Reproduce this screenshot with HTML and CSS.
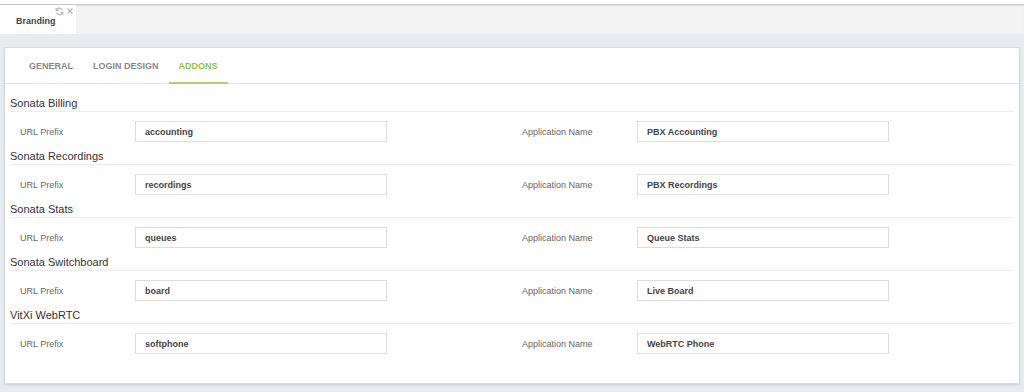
FILE: index.html
```html
<!DOCTYPE html>
<html>
<head>
<meta charset="UTF-8">
<title>Branding</title>
<link rel="stylesheet" href="styles.css">
</head>
<body>
<div class="topbar">
  <div class="doc-tab">
    <span class="doc-title">Branding</span>
    <span class="doc-icons">
      <svg class="ico" width="9" height="9" viewBox="0 0 8 8"><path d="M6.6 3.2A2.7 2.7 0 0 0 1.6 2.4M1.4 4.8a2.7 2.7 0 0 0 5 .8" fill="none" stroke="#b5b5b5" stroke-width="1"/><path d="M1 .8v2.2h2.2M7 7.2V5H4.8" fill="none" stroke="#b5b5b5" stroke-width="1"/></svg>
      <svg class="ico" width="8" height="8" viewBox="0 0 8 8"><path d="M1.5 1.5l5 5M6.5 1.5l-5 5" stroke="#b5b5b5" stroke-width="1.3"/></svg>
    </span>
  </div>
</div>
<div class="page">
  <div class="panel">
    <div class="tabs">
      <div class="tab">GENERAL</div>
      <div class="tab">LOGIN DESIGN</div>
      <div class="tab active">ADDONS</div>
    </div>
    <div class="panel-body">
      <div class="section">
        <div class="section-title">Sonata Billing</div>
        <div class="row">
          <div class="field"><label>URL Prefix</label><input type="text" value="accounting"></div>
          <div class="field"><label>Application Name</label><input type="text" value="PBX Accounting"></div>
        </div>
      </div>
      <div class="section">
        <div class="section-title">Sonata Recordings</div>
        <div class="row">
          <div class="field"><label>URL Prefix</label><input type="text" value="recordings"></div>
          <div class="field"><label>Application Name</label><input type="text" value="PBX Recordings"></div>
        </div>
      </div>
      <div class="section">
        <div class="section-title">Sonata Stats</div>
        <div class="row">
          <div class="field"><label>URL Prefix</label><input type="text" value="queues"></div>
          <div class="field"><label>Application Name</label><input type="text" value="Queue Stats"></div>
        </div>
      </div>
      <div class="section">
        <div class="section-title">Sonata Switchboard</div>
        <div class="row">
          <div class="field"><label>URL Prefix</label><input type="text" value="board"></div>
          <div class="field"><label>Application Name</label><input type="text" value="Live Board"></div>
        </div>
      </div>
      <div class="section">
        <div class="section-title">VitXi WebRTC</div>
        <div class="row">
          <div class="field"><label>URL Prefix</label><input type="text" value="softphone"></div>
          <div class="field"><label>Application Name</label><input type="text" value="WebRTC Phone"></div>
        </div>
      </div>
    </div>
  </div>
</div>
</body>
</html>
```

FILE: styles.css
```css
html, body { margin: 0; padding: 0; }
body { background: #e9ecee; font-family: "Liberation Sans", Arial, sans-serif; color: #333; height: 392px; overflow: hidden; }

.topbar { background: #f3f3f3; border-top: 4px solid #fff; box-shadow: inset 0 1px 0 #c8c8c8, inset 0 2px 1px #e0e0e0; height: 30px; display: flex; }
.doc-tab { background: #fff; width: 76px; display: flex; align-items: flex-start; box-sizing: border-box; padding-left: 16px; margin-top: 1px; }
.doc-title { font-size: 9px; font-weight: bold; color: #444; padding-top: 11px; }
.doc-icons { display: flex; gap: 2px; margin-top: 2px; margin-left: -1px; }
.ico { display: block; }

.page { padding: 13px 4px 0 4px; }
.panel { background: #fff; border: 1px solid #dadada; box-shadow: 0 1px 2px rgba(0,0,0,.12); height: 335px; }

.tabs { display: flex; padding-left: 14px; border-bottom: 1px solid #e3e3e3; height: 35px; }
.tab { font-size: 9px; font-weight: bold; color: #888; padding: 0 10px; height: 36px; box-sizing: border-box; display: flex; align-items: center; margin-bottom: -1px; border-bottom: 2px solid transparent; padding-top: 1px; }
.tab.active { color: #8cc63f; border-bottom-color: #a9d46e; }

.panel-body { padding: 10px 5px 0 5px; }
.section-title { font-size: 11px; color: #333; height: 17px; line-height: 18px; border-bottom: 1px solid #ececec; }
.row { display: grid; grid-template-columns: 1fr 1fr; padding: 9px 0 5px; }
.field { display: flex; align-items: center; }
.field label { width: 115px; padding-left: 10px; font-size: 9px; color: #666; }
.field input { width: 252px; height: 21px; box-sizing: border-box; border: 1px solid #dcdcdc; padding: 0 9px; font-family: "Liberation Sans", Arial, sans-serif; font-size: 9px; font-weight: bold; color: #444; outline: none; margin: 0; }
```
